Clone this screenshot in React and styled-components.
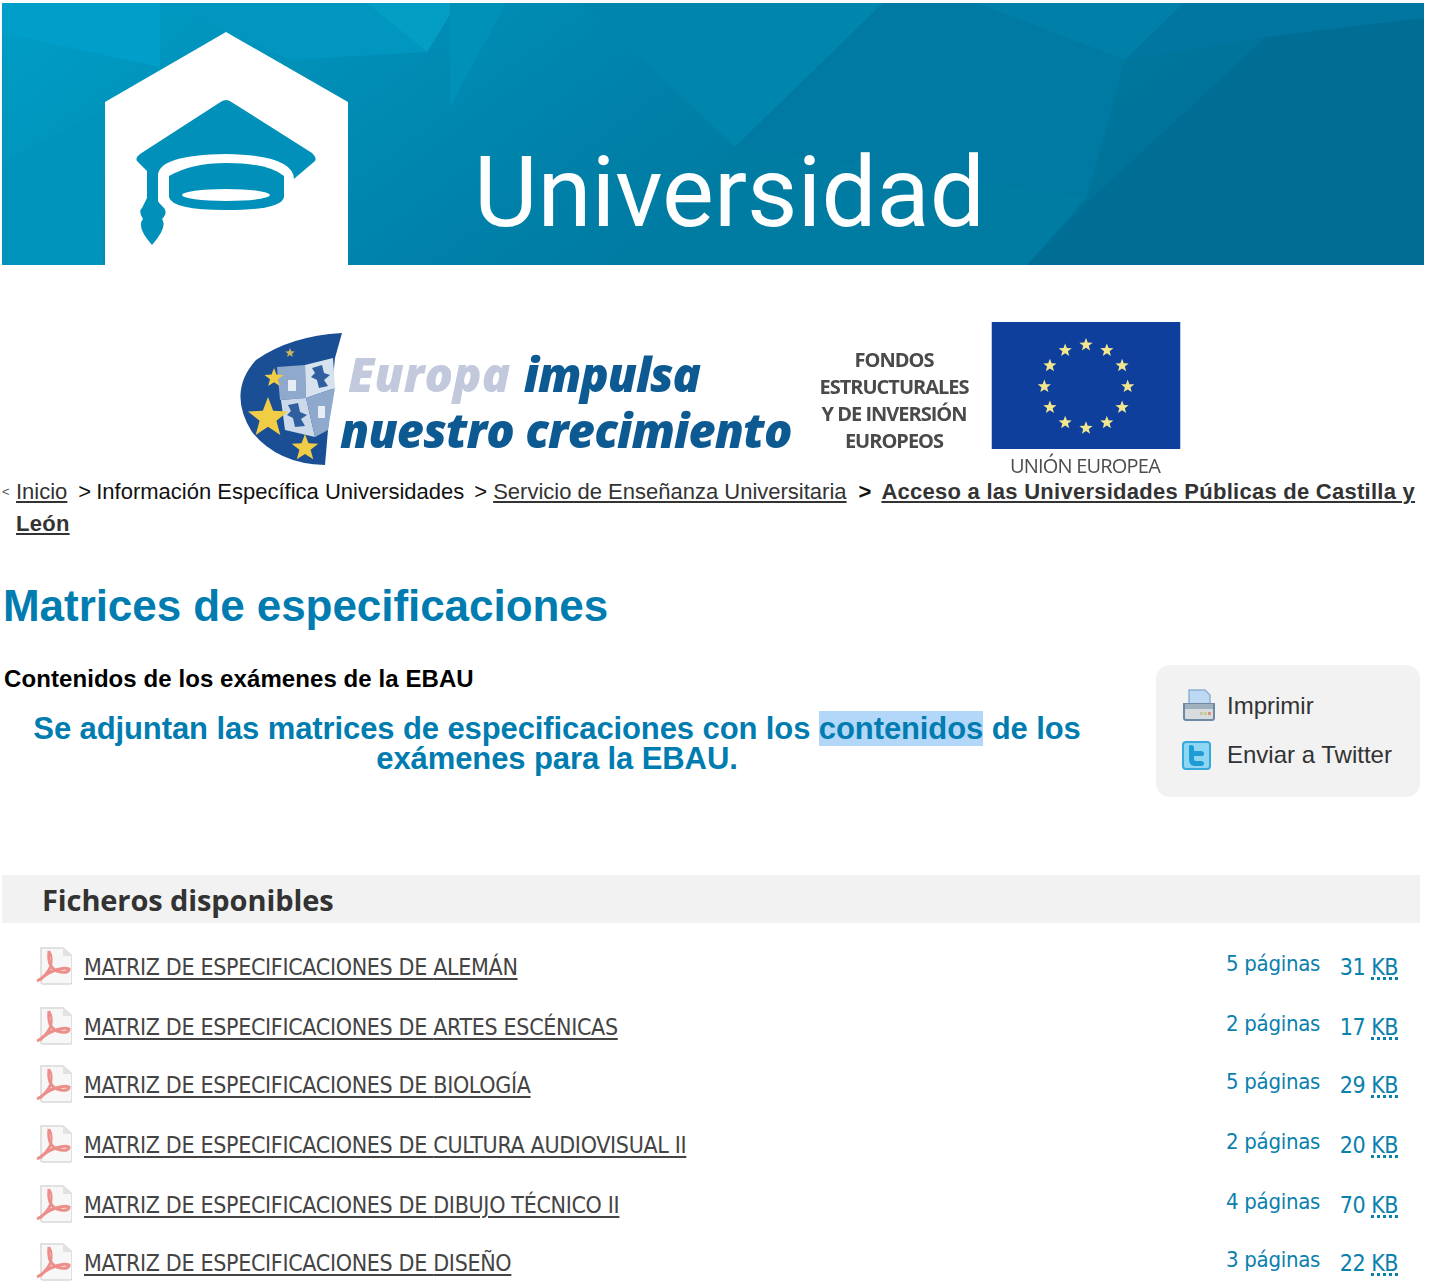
import React from "react";
import styled, { createGlobalStyle } from "styled-components";

const Global = createGlobalStyle`
  html, body { margin: 0; padding: 0; background: #fff; overflow: hidden; }
  body { font-family: "Liberation Sans", Arial, sans-serif; }
`;
const Page = styled.div`
  width: 1434px; height: 1284px; overflow: hidden; box-sizing: border-box;
  padding: 3px 14px 0 2px; display: flex; flex-direction: column;
`;
const Banner = styled.svg`
  display: block; width: 1422px; height: 262px; flex: none;
`;
const LogoRow = styled.div`
  height: 211px; flex: none; display: flex; justify-content: flex-start; padding: 57px 0 0 238px; box-sizing: border-box; gap: 26px;
`;
const RegionLogo = styled.div`
  width: 552px; height: 140px; position: relative; flex: none;
`;
const RegionArt = styled.svg`
  position: absolute; left: 0; top: 8px; width: 104px; height: 136px; filter: blur(0.6px);
`;
const Slogan = styled.div`
  position: absolute; left: 100px; top: 24px; font: italic 800 47px/56px "Open Sans", sans-serif; color: #0d5a92; white-space: nowrap; letter-spacing: -0.85px; filter: blur(0.6px);
`;
const SloganLine = styled.div`
  margin-left: ${p => p.$indent || 0}px;
`;
const Pale = styled.span` color: #c2c9dc; letter-spacing: 0.1px; `;
const Impulsa = styled.span` margin-left: 2px; letter-spacing: -1.1px; `;
const FundText = styled.div`
  width: 152px; flex: none; padding-top: 24px; text-align: center; color: #4a4a4a; font: 700 20px/27px "Open Sans", sans-serif; letter-spacing: -1px; filter: blur(0.45px); white-space: nowrap;
`;
const FlagCol = styled.div`
  width: 190px; margin-left: -5px; flex: none; display: flex; flex-direction: column; align-items: center;
`;
const Flag = styled.svg` display: block; width: 190px; height: 128px; filter: blur(0.4px); `;
const FlagLabel = styled.div`
  margin-top: 7px; margin-right: 2px; color: #4d4d4d; font: 400 20px/20px "Open Sans", sans-serif; letter-spacing: -0.8px; filter: blur(0.3px); white-space: nowrap;
`;
const Crumbs = styled.div`
  padding-left: 14px; position: relative; font-size: 22px; line-height: 31.5px; color: #111; width: 1410px; box-sizing: content-box;
`;
const Caret = styled.span`
  position: absolute; left: 0; top: 2px; font-size: 13px; color: #555; line-height: 28px;
`;
const CrumbLink = styled.a`
  color: #333; text-decoration: underline;
`;
const CrumbStrong = styled.a`
  color: #333; font-weight: 700; text-decoration: underline; letter-spacing: 0.26px;
`;
const Sep = styled.span`
  margin: 0 ${p => p.$r}px 0 ${p => p.$l}px; font-weight: ${p => p.$bold ? 700 : 400};
`;
const Title = styled.h1`
  margin: 25px 0 0 1px; padding-top: 16px; font-size: 44px; line-height: 52px; font-weight: 700; color: #007cb0; letter-spacing: -0.05px;
`;
const Main = styled.div`
  display: flex; margin-top: 31px; align-items: flex-start; height: 212px; flex: none;
`;
const Intro = styled.div`
  width: 1110px; flex: none;
`;
const Sub = styled.h2`
  margin: 0 0 0 2px; font-size: 24px; line-height: 32px; font-weight: 700; color: #000; letter-spacing: 0.08px;
`;
const Lead = styled.p`
  margin: 19px 0 0; text-align: center; font-size: 31px; line-height: 30px; font-weight: 700; color: #007cb0; letter-spacing: -0.1px;
`;
const Hl = styled.span` background: #b3d7f9; `;
const Tools = styled.div`
  margin-left: 44px; margin-top: 2px; width: 264px; height: 132px; box-sizing: border-box; flex: none; background: #f2f2f2; border-radius: 14px; padding: 24px 0 0 26px; display: flex; flex-direction: column; gap: 15px;
`;
const Tool = styled.div`
  display: flex; align-items: center; gap: 11px; font-size: 24px; line-height: 34px; color: #333;
`;
const Ico = styled.svg` display: block; width: 34px; height: 34px; flex: none; `;
const FilesHead = styled.h3`
  margin: 0; height: 48px; background: #f2f2f2; width: 1418px; box-sizing: border-box; padding-left: 40px; font: 700 29px/50px "Open Sans", sans-serif; color: #333; letter-spacing: -0.1px;
`;
const List = styled.ul`
  margin: 14px 0 0; padding: 0; list-style: none; width: 1418px;
`;
const Row = styled.li`
  height: ${p => p.$h}px; display: flex; align-items: flex-start; padding-left: 32px; box-sizing: border-box; font-family: "DejaVu Sans Condensed", "DejaVu Sans", sans-serif; font-stretch: condensed; font-size: 23px; line-height: 32px;
`;
const Pdf = styled.svg` display: block; width: 38px; height: 38px; flex: none; margin-top: 10px; `;
const FileLink = styled.a`
  margin-left: 12px; margin-top: 14px; color: #444; text-decoration: underline; text-underline-offset: 3px; white-space: nowrap; letter-spacing: -0.32px;
`;
const Pages = styled.span`
  margin-left: auto; margin-top: 11px; color: #0a80ad; white-space: nowrap; font-size: 22px; letter-spacing: -0.3px;
`;
const Size = styled.span`
  width: 60px; margin-left: 18px; margin-top: 14px; margin-right: 22px; color: #0a80ad; white-space: nowrap; text-align: right; letter-spacing: -0.5px;
`;
const Abbr = styled.abbr`
  text-decoration: underline dotted #0a80ad 3px; text-underline-offset: 2px;
`;

const Star = ({ x, y, r, fill = "#f4d943" }) => {
  const pts = [];
  for (let i = 0; i < 10; i++) {
    const a = -Math.PI / 2 + i * Math.PI / 5;
    const q = i % 2 ? r * 0.42 : r;
    pts.push(`${x + q * Math.cos(a)},${y + q * Math.sin(a)}`);
  }
  return <polygon points={pts.join(" ")} fill={fill} />;
};

const BannerArt = () => (
  <Banner viewBox="2 3 1422 262">
    <defs>
      <linearGradient id="bg" x1="0" y1="0" x2="1" y2="0.25">
        <stop offset="0" stopColor="#009ec7" />
        <stop offset="0.25" stopColor="#0090b8" />
        <stop offset="0.55" stopColor="#007fa7" />
        <stop offset="1" stopColor="#006f95" />
      </linearGradient>
    </defs>
    <rect x="2" y="3" width="1422" height="262" fill="url(#bg)" />
    <polygon points="2,3 160,3 160,67 2,33" fill="#009fc9" />
    <polygon points="2,163 103,110 103,265 2,265" fill="#0094bd" />
    <polygon points="160,3 457,3 427,52 290,60" fill="#0096bf" />
    <polygon points="367,3 457,3 427,52" fill="#049dc3" />
    <polygon points="450,3 506,3 450,107" fill="#0091b9" />
    <polygon points="582,3 883,3 735,147" fill="#0086ac" />
    <polygon points="883,3 977,3 1125,60 1087,197 735,147" fill="#007aa3" />
    <polygon points="977,3 1184,3 1125,60" fill="#0080a8" />
    <polygon points="1184,3 1424,3 1424,18 1266,37 1125,60" fill="#0076a0" />
    <polygon points="616,265 735,147 1087,197 1027,265" fill="#007ba2" />
    <polygon points="1266,37 1424,18 1424,265 1027,265 1090,200" fill="#006e94" />
    <g transform="translate(2 3)">
      <polygon points="224,29 346,99 346,262 103,262 103,99" fill="#fff" />
      <path d="M224 97 Q227 97 231 100 L310 150 Q315 155 313 158 L293 175 L292 176 Q291 152 224 151 Q157 152 156 172 L156 198 Q156 199 162 205 Q166 210 160 216 Q166 224 150 242 Q134 224 141 216 Q136 208 140 205 L145 195 L145 168 L135 158 Q133 155 138 151 L217 100 Q221 97 224 97 Z" fill="#0090ba" />
      <path d="M167 173 Q190 160 224 160 Q266 160 282 173 L282 194 Q280 207 224 207 Q170 207 167 194 Z" fill="#0090ba" />
      <ellipse cx="224" cy="192" rx="44" ry="6" fill="#fff" />
    </g>
    <text x="474" y="226" fontFamily="Roboto, sans-serif" fontSize="98" fill="#fff" textLength="511" lengthAdjust="spacingAndGlyphs">Universidad</text>
  </Banner>
);

const Region = () => (
  <RegionArt viewBox="0 0 104 136">
    <path d="M102 3 L95 28 L88 100 L85 135 Q38 134 12 102 Q-13 62 16 30 Q50 6 102 3 Z" fill="#1b4f95" />
    <polygon points="37,37 65,35 66,68 40,70" fill="#8ea9cb" />
    <polygon points="65,35 93,28 95,58 66,68" fill="#d7e2ef" />
    <polygon points="41,70 66,68 75,107 45,100" fill="#cbd9ea" />
    <polygon points="66,68 95,58 88,100 75,107" fill="#8ea9cb" />
    <path d="M72 38 l10 -3 2 8 6 2 -6 5 4 6 -9 2 -2 -8 -6 -3 4 -4 Z" fill="#2f5f9f" />
    <path d="M48 75 l10 -2 2 9 7 3 -6 4 4 7 -10 1 -2 -9 -6 -3 4 -4 Z" fill="#2f5f9f" />
    <rect x="48" y="50" width="8" height="11" fill="#e6edf5" />
    <rect x="78" y="76" width="7" height="12" fill="#e6edf5" />
    <Star x={34} y={48} r={10} fill="#f1cd45" />
    <Star x={28} y={88} r={21} fill="#f1cd45" />
    <Star x={65} y={118} r={14} fill="#f1cd45" />
    <Star x={50} y={23} r={5} fill="#c9b95a" />
  </RegionArt>
);

const EuFlag = () => {
  const stars = [];
  for (let i = 0; i < 12; i++) {
    const a = i * Math.PI / 6;
    stars.push(<Star key={i} x={95 + 42 * Math.sin(a)} y={65 - 42 * Math.cos(a)} r={7} fill="#f2e68e" />);
  }
  return (
    <Flag viewBox="0 0 190 128">
      <rect width="190" height="128" fill="#0e3f9d" />
      {stars}
    </Flag>
  );
};

const PdfIcon = () => (
  <Pdf viewBox="0 0 38 38">
    <path d="M7 1 H29 L38 9 V35 Q38 37 36 37 H9 Q7 37 7 35 Z" fill="#f7f7f7" stroke="#d9d9d9" strokeWidth="1.5" />
    <path d="M29 1 V9 H38 Z" fill="#e2e2e2" />
    <path d="M15 4 Q14 14 17 19 Q12 30 3 34 M17 19 Q20 24 27 25 Q35 26 35 22 Q31 20 22 23 Q12 26 6 33" fill="none" stroke="#ec8f8a" strokeWidth="3" />
    <path d="M15 4 Q19 9 17 19" fill="none" stroke="#ec8f8a" strokeWidth="2" />
  </Pdf>
);

const PrintIcon = () => (
  <Ico viewBox="0 0 34 34">
    <path d="M7 1 H23 L28 6 V18 H7 Z" fill="#bcd8f3" stroke="#8eb2d2" strokeWidth="1.5" />
    <path d="M2 15 H32 V29 Q32 31 30 31 H4 Q2 31 2 29 Z" fill="#d9dcde" stroke="#6d89a3" strokeWidth="2" />
    <rect x="3" y="15" width="28" height="5" fill="#9fb0bf" />
    <rect x="18" y="23" width="3" height="3" fill="#c8c8a0" />
    <rect x="22" y="23" width="3" height="3" fill="#bfd38f" />
    <rect x="26" y="23" width="3" height="3" fill="#e58f83" />
  </Ico>
);

const TwitterIcon = () => (
  <Ico viewBox="0 0 34 34">
    <rect x="1" y="4" width="27" height="27" rx="3" fill="#8fd6f3" stroke="#35a8dc" strokeWidth="2" />
    <path d="M7 8 Q7 7 9 7 Q12 7 12 10 V13 H19 Q22 13 22 16 Q22 18 19 18 H12 V21 Q12 23 14 23 H19 Q22 23 22 25.5 Q22 28 19 28 H13 Q7 28 7 21 Z" fill="#1f9bd6" />
  </Ico>
);

const files = [
  ["ALEMÁN", 5, 31, 60],
  ["ARTES ESCÉNICAS", 2, 17, 58],
  ["BIOLOGÍA", 5, 29, 60],
  ["CULTURA AUDIOVISUAL II", 2, 20, 60],
  ["DIBUJO TÉCNICO II", 4, 70, 58],
  ["DISEÑO", 3, 22, 40],
];

export default function App() {
  return (
    <>
      <Global />
      <Page>
        <BannerArt />
        <LogoRow>
          <RegionLogo>
            <Region />
            <Slogan>
              <SloganLine $indent={8}><Pale>Europa</Pale> <Impulsa>impulsa</Impulsa></SloganLine>
              <SloganLine>nuestro crecimiento</SloganLine>
            </Slogan>
          </RegionLogo>
          <FundText>FONDOS<br />ESTRUCTURALES<br />Y DE INVERSIÓN<br />EUROPEOS</FundText>
          <FlagCol>
            <EuFlag />
            <FlagLabel>UNIÓN EUROPEA</FlagLabel>
          </FlagCol>
        </LogoRow>
        <Crumbs>
          <Caret>&lt;</Caret>
          <CrumbLink>Inicio</CrumbLink>
          <Sep $l={11} $r={5}>&gt;</Sep>Información Específica Universidades
          <Sep $l={10} $r={6}>&gt;</Sep><CrumbLink>Servicio de Enseñanza Universitaria</CrumbLink>
          <Sep $bold $l={12} $r={10}>&gt;</Sep><CrumbStrong>Acceso a las Universidades Públicas de Castilla y León</CrumbStrong>
        </Crumbs>
        <Title>Matrices de especificaciones</Title>
        <Main>
          <Intro>
            <Sub>Contenidos de los exámenes de la EBAU</Sub>
            <Lead>Se adjuntan las matrices de especificaciones con los <Hl>contenidos</Hl> de los<br />exámenes para la EBAU.</Lead>
          </Intro>
          <Tools>
            <Tool><PrintIcon />Imprimir</Tool>
            <Tool><TwitterIcon />Enviar a Twitter</Tool>
          </Tools>
        </Main>
        <FilesHead>Ficheros disponibles</FilesHead>
        <List>
          {files.map(([name, pages, kb, h]) => (
            <Row key={name} $h={h}>
              <PdfIcon />
              <FileLink>MATRIZ DE ESPECIFICACIONES DE {name}</FileLink>
              <Pages>{pages} páginas</Pages>
              <Size>{kb} <Abbr>KB</Abbr></Size>
            </Row>
          ))}
        </List>
      </Page>
    </>
  );
}
